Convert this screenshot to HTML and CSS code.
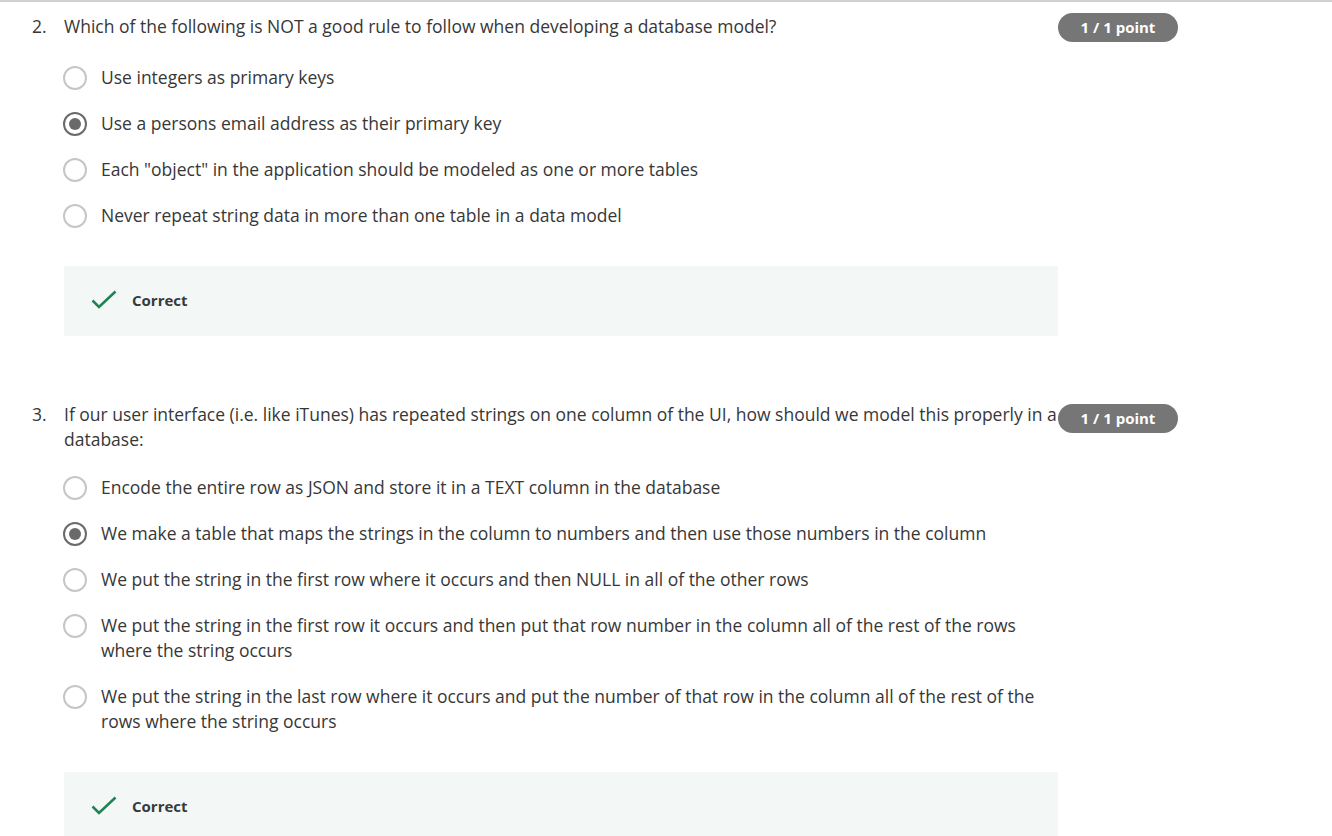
FILE: index.html
```html
<!DOCTYPE html>
<html>
<head>
<meta charset="utf-8">
<link rel="stylesheet" href="styles.css">
</head>
<body>
<div class="page">
  <section class="question q2">
    <div class="q-head">
      <span class="q-num">2.</span>
      <div class="q-text">Which of the following is NOT a good rule to follow when developing a database model?</div>
      <span class="badge">1 / 1 point</span>
    </div>
    <div class="options">
      <div class="option"><span class="radio"></span><span class="opt-text">Use integers as primary keys</span></div>
      <div class="option"><span class="radio checked"></span><span class="opt-text">Use a persons email address as their primary key</span></div>
      <div class="option"><span class="radio"></span><span class="opt-text">Each "object" in the application should be modeled as one or more tables</span></div>
      <div class="option"><span class="radio"></span><span class="opt-text">Never repeat string data in more than one table in a data model</span></div>
    </div>
    <div class="feedback">
      <svg class="check" width="26" height="20" viewBox="0 0 26 20"><path d="M1.5 10.5 L8 17 L24.5 1.5" fill="none" stroke="#1f8354" stroke-width="2.6"/></svg>
      <span class="fb-text">Correct</span>
    </div>
  </section>

  <section class="question q3">
    <div class="q-head">
      <span class="q-num">3.</span>
      <div class="q-text">If our user interface (i.e. like iTunes) has repeated strings on one column of the UI, how should we model this properly in a database:</div>
      <span class="badge">1 / 1 point</span>
    </div>
    <div class="options">
      <div class="option"><span class="radio"></span><span class="opt-text">Encode the entire row as JSON and store it in a TEXT column in the database</span></div>
      <div class="option"><span class="radio checked"></span><span class="opt-text">We make a table that maps the strings in the column to numbers and then use those numbers in the column</span></div>
      <div class="option"><span class="radio"></span><span class="opt-text">We put the string in the first row where it occurs and then NULL in all of the other rows</span></div>
      <div class="option"><span class="radio"></span><span class="opt-text">We put the string in the first row it occurs and then put that row number in the column all of the rest of the rows where the string occurs</span></div>
      <div class="option"><span class="radio"></span><span class="opt-text">We put the string in the last row where it occurs and put the number of that row in the column all of the rest of the rows where the string occurs</span></div>
    </div>
    <div class="feedback">
      <svg class="check" width="26" height="20" viewBox="0 0 26 20"><path d="M1.5 10.5 L8 17 L24.5 1.5" fill="none" stroke="#1f8354" stroke-width="2.6"/></svg>
      <span class="fb-text">Correct</span>
    </div>
  </section>
</div>
</body>
</html>
```

FILE: styles.css
```css
html, body {
  margin: 0;
  padding: 0;
  background: #ffffff;
}

body {
  font-family: "Open Sans", "Liberation Sans", sans-serif;
  color: #373737;
  border-top: 2px solid #d0d0d0;
}

.page {
  padding: 12px 0 0 32px;
}

.question {
  width: 1026px;
}

.q3 {
  margin-top: 66px;
}

.q-head {
  position: relative;
  display: flex;
  font-size: 17.5px;
  line-height: 25px;
}

.q-num {
  width: 32px;
  flex: none;
}

.q-text {
  width: 1000px;
}

.badge {
  position: absolute;
  left: 1026px;
  top: -1px;
  width: 120px;
  height: 29px;
  border-radius: 15px;
  background: #767676;
  color: #ffffff;
  font-size: 15px;
  font-weight: 700;
  line-height: 29px;
  text-align: center;
}

.q3 .badge {
  top: 2px;
}

.options {
  margin: 26px 0 0 31px;
  display: flex;
  flex-direction: column;
  gap: 21px;
}

.q3 .options {
  margin-top: 23px;
}

.option {
  display: flex;
  align-items: flex-start;
  gap: 14px;
  font-size: 17.5px;
  line-height: 25px;
}

.radio {
  flex: none;
  box-sizing: border-box;
  width: 24px;
  height: 24px;
  margin-top: 1px;
  border: 2px solid #c6c6c6;
  border-radius: 50%;
  position: relative;
}

.radio.checked {
  border-color: #6a6a6a;
}

.radio.checked::after {
  content: "";
  position: absolute;
  left: 4px;
  top: 4px;
  width: 12px;
  height: 12px;
  border-radius: 50%;
  background: #6a6a6a;
}

.opt-text {
  width: 957px;
}

.feedback {
  margin: 38px 0 0 32px;
  width: 994px;
  height: 70px;
  box-sizing: border-box;
  padding-left: 27px;
  background: #f3f8f6;
  display: flex;
  align-items: center;
  gap: 15px;
}

.check {
  flex: none;
  margin-top: -3px;
}

.fb-text {
  font-size: 15px;
  font-weight: 700;
  color: #373a3c;
  margin-top: -2px;
}
```
